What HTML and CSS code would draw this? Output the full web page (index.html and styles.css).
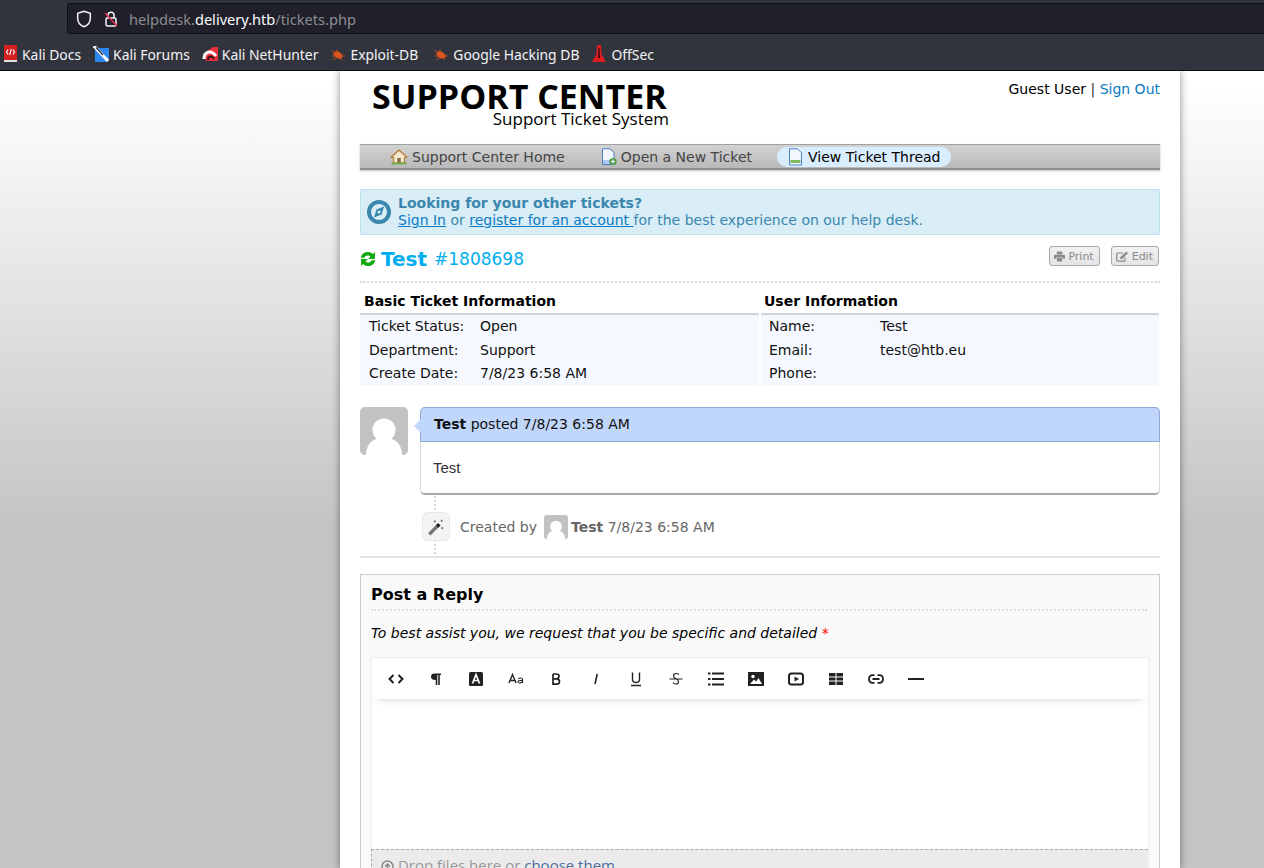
FILE: index.html
```html
<!DOCTYPE html>
<html lang="en">
<head>
    <meta charset="UTF-8">
    <meta name="viewport" content="width=device-width, initial-scale=1.0">
    <title>Support Center</title>
    <link rel="stylesheet" href="styles.css">
</head>
<body>
    <div class="browser-bar">
        <div class="url-row">
            <div class="url-box">
                <svg class="url-icon" width="16" height="18" viewBox="0 0 16 18"><path d="M8 1.2 14.3 3.2V8.5C14.3 12.6 11.6 15.4 8 16.8 4.4 15.4 1.7 12.6 1.7 8.5V3.2Z" fill="none" stroke="#f4f4f4" stroke-width="1.5"/></svg>
                <svg class="url-icon lock" width="16" height="18" viewBox="0 0 16 18"><path d="M5 8V5.2C5 3.4 6.2 2.2 8 2.2S11 3.4 11 5.2V8" fill="none" stroke="#f4f4f4" stroke-width="1.5"/><rect x="3" y="8" width="10" height="8" rx="1.5" fill="none" stroke="#f4f4f4" stroke-width="1.5"/><path d="M2 3 14 16" stroke="#e22850" stroke-width="1.6"/></svg>
                <span class="url-text">helpdesk.<b>delivery.htb</b>/tickets.php</span>
            </div>
        </div>
        <div class="bookmarks">
            <span class="bookmark">
                <svg width="16" height="18" viewBox="0 0 16 18"><rect x="2" y="0" width="13" height="15" fill="#d42020"/><rect x="2" y="15" width="13" height="2" fill="#e8e0e0"/><path d="M6 4.500 4.500 7 6 9.500M11 4.500 12.500 7 11 9.500M9.300 4 7.700 10" stroke="#fff" fill="none" stroke-width="1.100"/></svg>
                Kali Docs
            </span>
            <span class="bookmark">
                <svg width="16" height="16" viewBox="0 0 16 16"><path d="M2 2H16V13L14 16H2Z" fill="#2e86ef"/><path d="M1 0 15 15" stroke="#fff" stroke-width="3"/><path d="M3 1.500 10 9" stroke="#223" stroke-width="1.200"/></svg>
                Kali Forums
            </span>
            <span class="bookmark">
                <svg width="16" height="16" viewBox="0 0 16 16"><path d="M1 8 11 1H16V15H4Z" fill="#e8303a"/><path d="M2 13C2 6 9 3 14 10" fill="none" stroke="#fff" stroke-width="3"/><path d="M6 14C6 10 10 9 12 13" fill="none" stroke="#3a1018" stroke-width="2"/></svg>
                Kali NetHunter
            </span>
            <span class="bookmark exploit">
                <svg width="16" height="16" viewBox="0 0 16 16"><ellipse cx="8" cy="9" rx="5" ry="3.300" transform="rotate(30 8 9)" fill="#d9541e"/><path d="M1.500 4 5 7M7 3.500 7 6M2 10H4M3 14 6 12M15 10H12M12 14 10 12" stroke="#b84a1c" stroke-width="1"/></svg>
                Exploit-DB
            </span>
            <span class="bookmark">
                <svg width="16" height="16" viewBox="0 0 16 16"><ellipse cx="8" cy="9" rx="5" ry="3.300" transform="rotate(30 8 9)" fill="#d9541e"/><path d="M1.500 4 5 7M7 3.500 7 6M2 10H4M3 14 6 12M15 10H12M12 14 10 12" stroke="#b84a1c" stroke-width="1"/></svg>
                Google Hacking DB
            </span>
            <span class="bookmark">
                <svg width="16" height="18" viewBox="0 0 16 18"><path d="M6 0H10L10.500 9 15 17H1L5.500 9Z" fill="#e01b24"/><path d="M7.400 3H8.600L9 13H7Z" fill="#4a0a0e"/></svg>
                OffSec
            </span>
        </div>
    </div>

    <div class="page-bg">
        <div class="container">
            <div class="header">
                <div class="logo">
                    <div class="logo-main">SUPPORT CENTER</div>
                    <div class="logo-sub">Support Ticket System</div>
                </div>
                <div class="user-links">Guest User <span class="sep">|</span> <a href="#">Sign Out</a></div>
            </div>

            <ul class="nav">
                <li>
                    <svg width="18" height="16" viewBox="0 0 18 16"><path d="M9 1 1 8.500H3.500V14H14.500V8.500H17Z" fill="#f3e6cf" stroke="#b87a32" stroke-width="1.200" stroke-linejoin="round"/><rect x="7.300" y="9" width="3.400" height="5" fill="#8a6a40"/><rect x="1.500" y="13.500" width="15" height="2" fill="#6fae4a"/></svg>
                    Support Center Home
                </li>
                <li class="new-ticket">
                    <svg width="16" height="18" viewBox="0 0 16 18"><path d="M1.500.8H9L13 4.800V16.500H1.500Z" fill="#f2f7fd" stroke="#4a80c4"/><rect x="2" y="12" width="10.500" height="4" fill="#a8c8ec"/><circle cx="12" cy="13.500" r="3.600" fill="#4f9a45"/><path d="M10 13.500H14M12 11.500V15.500" stroke="#fff" stroke-width="1.200"/></svg>
                    Open a New Ticket
                </li>
                <li class="active">
                    <svg width="15" height="18" viewBox="0 0 15 18"><path d="M1.500.8H9.500L13.500 4.800V17H1.500Z" fill="#f2f7fd" stroke="#4a80c4"/><rect x="2.500" y="12" width="10" height="3" fill="#7cb95a"/></svg>
                    View Ticket Thread
                </li>
            </ul>

            <div class="notice">
                <svg class="notice-icon" width="26" height="26" viewBox="0 0 26 26"><circle cx="13" cy="13" r="10" fill="none" stroke="#3a87ad" stroke-width="4"/><path d="M18 7.500 15.600 15.600 8 18.500 10.400 10.400Z" fill="#3a87ad"/><circle cx="13" cy="13" r="1.600" fill="#d9edf7"/></svg>
                <div>
                    <strong>Looking for your other tickets?</strong><br>
                    <a href="#">Sign In</a> or <a href="#">register for an account </a>for the best experience on our help desk.
                </div>
            </div>

            <div class="ticket-title">
                <h1>
                    <svg width="16" height="16" viewBox="0 0 15 15"><path d="M.8 6.400C1.300 3 4.100.9 7.400.9 9.400.9 11 1.700 12.100 2.900L14 1V7.600H7.600L9.800 5.400C9.200 4.700 8.400 4.200 7.400 4.200 5.800 4.200 4.600 5 4.100 6.400ZM14.200 8.600C13.700 12 10.900 14.100 7.600 14.100 5.600 14.100 4 13.300 2.900 12.100L1 14V7.400H7.400L5.200 9.600C5.800 10.300 6.600 10.800 7.600 10.800 9.200 10.800 10.400 10 10.900 8.600Z" fill="#0fa80f"/></svg>
                    <span class="subject">Test</span> <small>#1808698</small>
                </h1>
                <div class="title-actions">
                    <a class="action-btn" href="#">
                        <svg width="11" height="11" viewBox="0 0 12 11"><path d="M3 0H9V3H3ZM1 3.500H11Q12 3.500 12 4.500V8H9.500V6.500H2.500V8H0V4.500Q0 3.500 1 3.500ZM3.200 7.200H8.800V11H3.200Z" fill="#8a8a8a"/></svg>
                        Print
                    </a>
                    <a class="action-btn" href="#">
                        <svg width="13" height="11" viewBox="0 0 13 11"><path d="M9 6.500V9.200Q9 10.200 8 10.200H1.800Q.8 10.200.8 9.200V3Q.8 2 1.800 2H7" fill="none" stroke="#8a8a8a" stroke-width="1.200"/><path d="M4.200 6.200 10.400.6 12 2.200 6.200 8H4.200Z" fill="#8a8a8a"/></svg>
                        Edit
                    </a>
                </div>
            </div>

            <div class="info-grid">
                <div class="info-col">
                    <h3>Basic Ticket Information</h3>
                    <dl class="info-list">
                        <dt>Ticket Status:</dt><dd>Open</dd>
                        <dt>Department:</dt><dd>Support</dd>
                        <dt>Create Date:</dt><dd>7/8/23 6:58 AM</dd>
                    </dl>
                </div>
                <div class="info-col user-col">
                    <h3>User Information</h3>
                    <dl class="info-list">
                        <dt>Name:</dt><dd>Test</dd>
                        <dt>Email:</dt><dd>test@htb.eu</dd>
                        <dt>Phone:</dt><dd></dd>
                    </dl>
                </div>
            </div>

            <div class="thread-entry">
                <div class="avatar">
                    <svg width="48" height="48" viewBox="0 0 48 48"><circle cx="24" cy="23" r="11.500" fill="#fff"/><path d="M6 48C6 37 13 30.500 24 30.500S42 37 42 48Z" fill="#fff"/></svg>
                </div>
                <div class="bubble">
                    <div class="bubble-head"><b>Test</b> posted 7/8/23 6:58 AM</div>
                    <div class="bubble-body">Test</div>
                </div>
            </div>

            <div class="thread-event">
                <span class="event-icon">
                    <svg width="18" height="18" viewBox="0 0 16 16"><path d="M2 14.500 10 6.500" stroke="#777" stroke-width="3"/><path d="M9 7.500 11 5.500" stroke="#222" stroke-width="3"/><path d="M7 2V4M6 3H8M13 1.500V3.500M12 2.500H14M13.500 8V10M12.500 9H14.500" stroke="#777" stroke-width=".9"/></svg>
                </span>
                <span class="event-text">Created by</span>
                <span class="event-avatar">
                    <svg width="24" height="24" viewBox="0 0 48 48"><circle cx="24" cy="23" r="11.500" fill="#fff"/><path d="M6 48C6 37 13 30.500 24 30.500S42 37 42 48Z" fill="#fff"/></svg>
                </span>
                <span class="event-text"><b>Test</b> 7/8/23 6:58 AM</span>
            </div>

            <div class="reply-box">
                <h2>Post a Reply</h2>
                <p class="reply-hint"><em>To best assist you, we request that you be specific and detailed</em> <span class="req">*</span></p>
                <div class="editor">
                    <div class="editor-toolbar">
                        <span class="tool"><svg width="16" height="16" viewBox="0 0 16 16"><path d="M5.500 4 1.500 8 5.500 12M10.500 4 14.500 8 10.500 12" fill="none" stroke="#222" stroke-width="2"/></svg></span>
                        <span class="tool"><svg width="16" height="16" viewBox="0 0 16 16"><path d="M6.500 2.500H13V4H11.800V14H10.200V4H9.300V14H7.700V9Q3 9 3 5.800T6.500 2.500Z" fill="#222"/></svg></span>
                        <span class="tool"><svg width="16" height="16" viewBox="0 0 16 16"><rect x="1" y="1" width="14" height="14" rx="1.500" fill="#222"/><path d="M4.500 12.500 8 3.500 11.500 12.500M5.800 9.500H10.200" fill="none" stroke="#fff" stroke-width="1.700"/></svg></span>
                        <span class="tool"><svg width="16" height="16" viewBox="0 0 16 16"><path d="M1 12 4.500 3.500 8 12M2.300 9.500H6.700" fill="none" stroke="#222" stroke-width="1.400"/><path d="M14.500 12V8.500C14.500 6.500 10.500 6.500 10.300 8M14.500 9.500C11 9.300 9.700 10 9.900 11 10.200 12.500 13.500 12.300 14.500 10.500" fill="none" stroke="#222" stroke-width="1.100"/></svg></span>
                        <span class="tool"><svg width="16" height="16" viewBox="0 0 16 16"><path d="M5 3H8.500Q11 3 11 5.300T8.500 7.800H5M8.500 7.800Q11.500 7.800 11.500 10.500T8.500 13.200H5V3" fill="none" stroke="#222" stroke-width="1.700"/></svg></span>
                        <span class="tool"><svg width="16" height="16" viewBox="0 0 16 16"><path d="M9.200 3 7 13" fill="none" stroke="#222" stroke-width="1.600"/></svg></span>
                        <span class="tool"><svg width="16" height="16" viewBox="0 0 16 16"><path d="M4.500 1.500V8.500Q4.500 11.500 8 11.500T11.500 8.500V1.500M3 14.500H13" fill="none" stroke="#222" stroke-width="1.400"/></svg></span>
                        <span class="tool"><svg width="16" height="16" viewBox="0 0 16 16"><path d="M11 3.500Q10.200 2.500 8.300 2.500 5.500 2.500 5.500 4.800 5.500 6.800 8 7.800T10.500 10.800Q10.500 13 8 13 6 13 5 11.500M1.500 8H14.500" fill="none" stroke="#222" stroke-width="1.200"/></svg></span>
                        <span class="tool"><svg width="16" height="16" viewBox="0 0 16 16"><path d="M0 2.500H2.500M4 2.500H16M0 8H2.500M4 8H16M0 13.500H2.500M4 13.500H16" stroke="#222" stroke-width="2"/></svg></span>
                        <span class="tool"><svg width="16" height="14" viewBox="0 0 16 14"><rect width="16" height="14" fill="#222"/><circle cx="5" cy="4.500" r="1.700" fill="#fff"/><path d="M2 12 6 7.500 8 9.500 10.500 6 14 12Z" fill="#fff"/></svg></span>
                        <span class="tool"><svg width="16" height="14" viewBox="0 0 16 14"><rect x="1" y="1.500" width="14" height="11" rx="2.500" fill="none" stroke="#222" stroke-width="2"/><path d="M6.500 4.500 11 7 6.500 9.500Z" fill="#222"/></svg></span>
                        <span class="tool"><svg width="16" height="12" viewBox="0 0 16 12"><path d="M1 0H7.500V3.500H1ZM8.500 0H15V3.500H8.500ZM1 4.500H7.500V7.500H1ZM8.500 4.500H15V7.500H8.500ZM1 8.500H7.500V12H1ZM8.500 8.500H15V12H8.500Z" fill="#222"/></svg></span>
                        <span class="tool"><svg width="16" height="10" viewBox="0 0 16 10"><path d="M6.500 1.200H4.500C2.500 1.200 1 2.700 1 5S2.500 8.800 4.500 8.800H6.500M9.500 1.200H11.500C13.500 1.200 15 2.700 15 5S13.500 8.800 11.500 8.800H9.500M4.500 5H11.500" fill="none" stroke="#222" stroke-width="1.800"/></svg></span>
                        <span class="tool"><svg width="16" height="2" viewBox="0 0 16 2"><rect width="16" height="2" fill="#222"/></svg></span>
                    </div>
                    <div class="editor-area"></div>
                    <div class="dropzone">
                        <svg width="13" height="13" viewBox="0 0 13 13"><circle cx="6.500" cy="6.500" r="5.500" fill="none" stroke="#888" stroke-width="1.500"/><path d="M6.500 10V4M4 6.500 6.500 4 9 6.500" fill="none" stroke="#888" stroke-width="1.500"/></svg>
                        Drop files here or <a href="#">choose them</a>
                    </div>
                </div>
            </div>
        </div>
    </div>
</body>
</html>
```

FILE: styles.css
```css
html, body {
    margin: 0;
    padding: 0;
    height: 868px;
    overflow: hidden;
}

body {
    font-family: "DejaVu Sans", sans-serif;
    font-size: 14px;
    color: #000;
    background: #c5c5c5;
}

a {
    color: #0a7bc4;
    text-decoration: none;
}

/* browser chrome */
.browser-bar {
    height: 70px;
    background: #32343d;
    border-bottom: 1px solid #0c0c0d;
    font-family: "Noto Sans", sans-serif;
    color: #f3f3f5;
}

.url-row {
    height: 40px;
    padding: 3px 0 0 67px;
    box-sizing: border-box;
}

.url-box {
    height: 31px;
    background: #1f2029;
    border: 1px solid #0f0f14;
    border-right: none;
    border-radius: 4px 0 0 4px;
    display: flex;
    align-items: center;
    padding-left: 8px;
    box-sizing: border-box;
    font-size: 14.600px;
}

.url-icon {
    margin-right: 11px;
}

.url-icon.lock {
    margin-right: 10px;
    margin-left: 0;
}

.url-text {
    color: #8c8c92;
}

.url-text b {
    color: #fbfbfe;
    font-weight: normal;
}

.bookmarks {
    display: flex;
    align-items: center;
    height: 28px;
    padding-bottom: 2px;
    font-size: 13.900px;
}

.bookmark {
    display: flex;
    align-items: center;
    gap: 4px;
    padding-left: 2px;
    margin-right: 10px;
    white-space: nowrap;
}

.bookmark.exploit {
    margin-right: 13px;
}

/* page */
.page-bg {
    height: 797px;
    background: linear-gradient(#fff 14px, #c5c5c5 450px);
    overflow: hidden;
}

.container {
    width: 800px;
    height: 797px;
    margin-left: 340px;
    padding: 0 20px;
    background: #fff;
    box-shadow: 0 0 8px rgba(0, 0, 0, 0.45);
}

.header {
    height: 73px;
    display: flex;
    justify-content: space-between;
}

.logo {
    padding: 10px 0 0 12px;
    width: 297px;
    font-family: "Open Sans", sans-serif;
    color: #000;
}

.logo-main {
    font-size: 34px;
    font-weight: 700;
    line-height: 30px;
    white-space: nowrap;
}

.logo-sub {
    font-size: 17px;
    line-height: 16px;
    text-align: right;
    white-space: nowrap;
}

.user-links {
    padding-top: 10px;
    font-size: 14px;
    line-height: 17px;
    color: #000;
}

.sep {
    color: #333;
}

.nav {
    list-style: none;
    margin: 0;
    height: 23px;
    padding: 0 0 0 20px;
    display: flex;
    align-items: center;
    gap: 16px;
    border-top: 1px solid #a0a0a0;
    border-bottom: 2px solid #8f8f8f;
    background: linear-gradient(#d2d2d2, #b9b9b9);
    box-shadow: 0 1px 2px rgba(0, 0, 0, 0.25);
    font-size: 14px;
    color: #444;
}

.nav li {
    display: flex;
    align-items: center;
    gap: 4px;
    height: 20px;
    padding: 0 10px;
    white-space: nowrap;
}

.nav li.active {
    background: #d9edfc;
    border-radius: 10px;
    color: #000;
    gap: 5px;
    margin-left: -1px;
    padding: 0 10px 0 11px;
}

.notice {
    margin-top: 19px;
    height: 44px;
    border: 1px solid #bce3ef;
    background: #d9edf7;
    color: #3a87ad;
    display: flex;
    align-items: center;
    gap: 6px;
    padding-left: 5px;
    line-height: 17px;
    font-size: 14px;
}

.notice a {
    color: #0a7bc4;
    text-decoration: underline;
}

.ticket-title {
    display: flex;
    justify-content: space-between;
    align-items: flex-start;
    margin-top: 10px;
    height: 36px;
    border-bottom: 2px dotted #d8d8d8;
}

.ticket-title h1 {
    margin: 0;
    font-size: 17px;
    font-weight: normal;
    color: #00aeef;
    display: flex;
    align-items: center;
    gap: 5px;
    height: 28px;
}

.subject {
    font-size: 20px;
    font-weight: 700;
}

.ticket-title small {
    font-size: 17px;
    margin-left: 2px;
}

.title-actions {
    display: flex;
    gap: 11px;
    padding: 1px 1px 0 0;
}

.action-btn {
    display: flex;
    align-items: center;
    gap: 3px;
    height: 18px;
    padding: 0 5px 0 4px;
    border: 1px solid #aaa;
    border-radius: 3px;
    background: linear-gradient(#f2f2f2, #e4e4e4);
    color: #8a8a8a;
    font-size: 11px;
}

.info-grid {
    display: flex;
    gap: 2px;
    margin-top: 8px;
}

.info-col {
    width: 399px;
}

.user-col {
    width: 398px;
}

.info-col h3 {
    margin: 0;
    height: 22px;
    padding-left: 4px;
    font-size: 14px;
    line-height: 21px;
    border-bottom: 2px solid #d2d6dc;
}

.user-col h3 {
    padding-left: 3px;
}

.info-list {
    margin: 0;
    padding: 0 0 0 9px;
    height: 70px;
    background: #f5f9ff;
    display: grid;
    grid-template-columns: 111px 1fr;
    grid-auto-rows: 23.500px;
    line-height: 23px;
}

.user-col .info-list {
    padding-left: 8px;
}

.info-list dt, .info-list dd {
    margin: 0;
    color: #111;
}

.thread-entry {
    display: flex;
    gap: 12px;
    margin-top: 22px;
}

.avatar {
    width: 48px;
    height: 48px;
    background: #c2c2c2;
    border-radius: 5px;
    overflow: hidden;
}

.avatar svg, .event-avatar svg {
    display: block;
}

.bubble {
    position: relative;
    flex: 1;
    border-radius: 5px;
    background: #fff;
    border: 1px solid #d8d8d8;
    border-bottom: 2px solid #a8a8a8;
    box-sizing: border-box;
    height: 88px;
}

.bubble::before {
    content: "";
    position: absolute;
    left: -7px;
    top: 11px;
    border-top: 7px solid transparent;
    border-bottom: 7px solid transparent;
    border-right: 7px solid #c0d6fb;
}

.bubble-head {
    height: 33px;
    margin: -1px -1px 0;
    padding-left: 13px;
    background: #c0d6fb;
    border: 1px solid #8fa9d6;
    border-radius: 5px 5px 0 0;
    line-height: 33px;
    color: #111;
}

.bubble-body {
    padding-left: 12px;
    font-family: "Liberation Sans", sans-serif;
    font-size: 15px;
    line-height: 52px;
    color: #333;
}

.thread-event {
    display: flex;
    align-items: center;
    height: 63px;
    padding: 2px 0 0 62px;
    border-bottom: 2px solid #e2e2e2;
    color: #666;
    box-sizing: border-box;
    background: linear-gradient(#d8d8d8 50%, transparent 50%) 74px 5px / 2px 4px repeat-y;
}

.event-icon {
    width: 28px;
    height: 29px;
    border-radius: 6px;
    background: #f4f4f4;
    border: 1px solid #e8e8e8;
    box-sizing: border-box;
    display: flex;
    align-items: center;
    justify-content: center;
    margin-right: 10px;
}

.event-avatar {
    width: 24px;
    height: 24px;
    margin: 0 3px 0 7px;
    background: #c2c2c2;
    border-radius: 3px;
    overflow: hidden;
}

.reply-box {
    margin-top: 16px;
    height: 320px;
    padding: 0 10px;
    background: #f9f9f9;
    border: 1px solid #ccc;
    border-bottom: none;
}

.reply-box h2 {
    margin: 0 2px 0 0;
    height: 34px;
    font-size: 16px;
    line-height: 40px;
    color: #000;
    border-bottom: 2px dotted #ddd;
}

.reply-hint {
    margin: 14px 0 0;
    height: 32px;
    font-size: 14px;
    line-height: 17px;
}

.req {
    color: #f00;
}

.editor {
    background: #fff;
    border: 1px solid #eee;
    border-bottom: none;
    height: 240px;
}

.editor-toolbar {
    display: flex;
    height: 41px;
    padding-left: 4px;
    background: #fff;
    box-shadow: 0 6px 8px -6px rgba(0, 0, 0, 0.2);
}

.tool {
    width: 40px;
    display: flex;
    align-items: center;
    justify-content: center;
}

.editor-area {
    height: 150px;
}

.dropzone {
    height: 40px;
    padding: 5px 9px;
    background: #ebebeb;
    border-top: 1px dashed #aaa;
    border-left: 1px dashed #aaa;
    margin-left: -1px;
    color: #999;
    font-family: "Open Sans", sans-serif;
    font-size: 15px;
}

.dropzone svg {
    vertical-align: -2px;
}

.dropzone a {
    color: #4a6d9c;
}
```
